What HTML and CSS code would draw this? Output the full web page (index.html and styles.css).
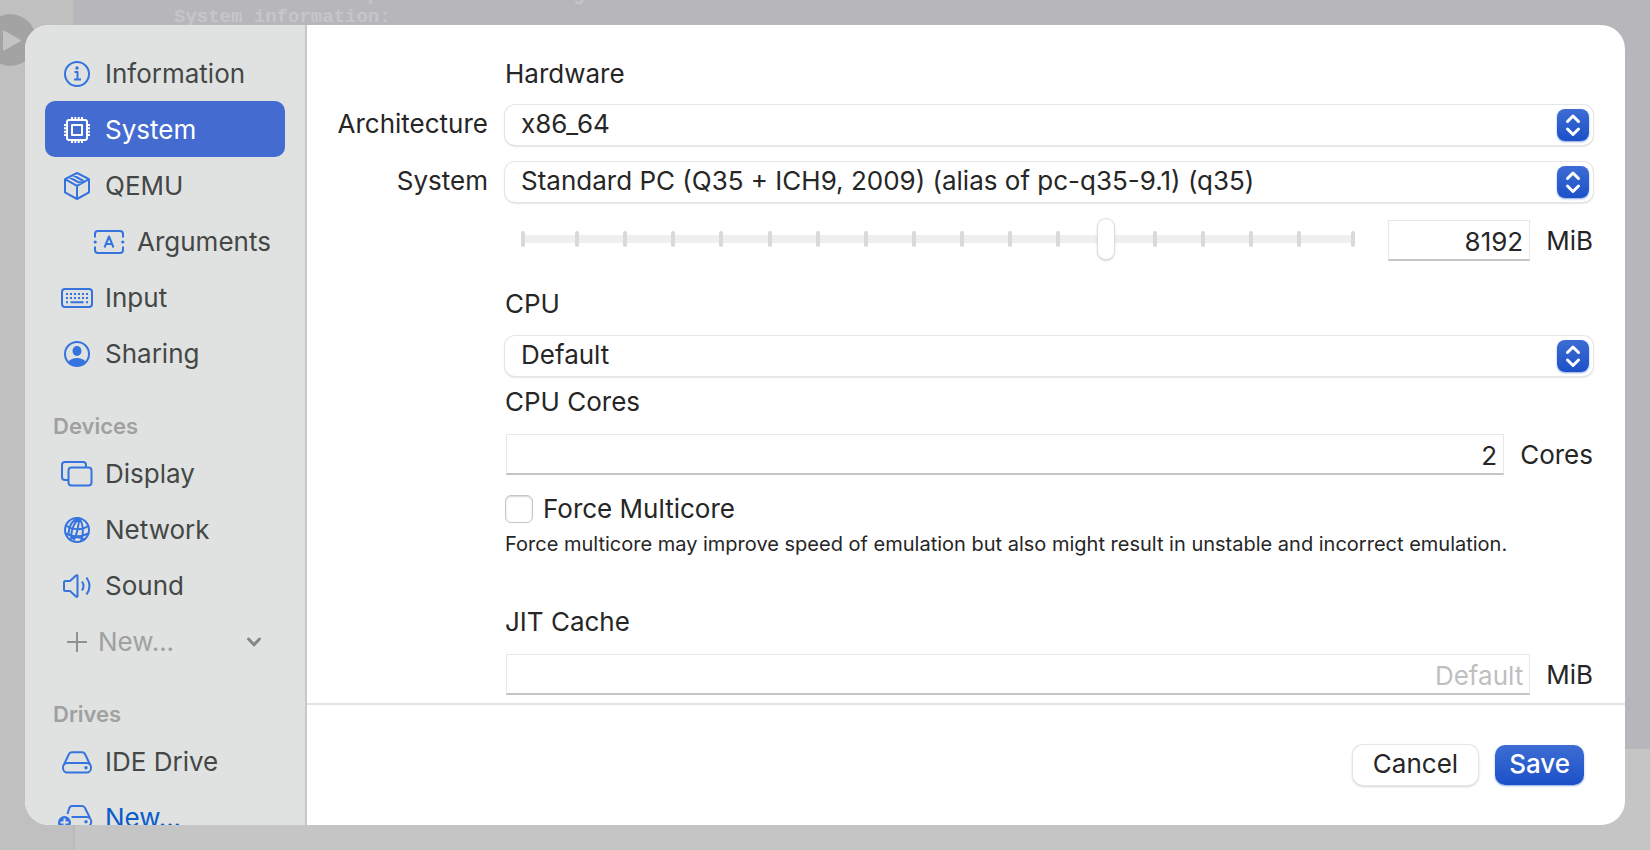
FILE: index.html
```html
<!DOCTYPE html>
<html lang="en">
<head>
<meta charset="utf-8">
<title>Virtual Machine Settings</title>
<link rel="stylesheet" href="styles.css">
</head>
<body>
<div class="backdrop" aria-hidden="true">
  <div class="backdrop-side">
    <svg class="play" viewBox="0 0 52 52"><circle cx="26" cy="26" r="26" fill="#a3a3a3"/><path d="M20 17.500v18l16-9z" fill="#c3c3c3" stroke="#c3c3c3" stroke-width="2" stroke-linejoin="round"/></svg>
  </div>
  <div class="backdrop-main">
    <pre class="console">                 p                 g
System information:</pre>
  </div>
</div>

<main class="sheet">
  <nav class="sidebar" aria-label="Settings">
    <ul class="nav-list">
      <li><a class="nav-item" href="#information">
        <svg class="icon" viewBox="0 0 32 32"><circle cx="16" cy="16" r="12"/><circle class="solid" cx="16" cy="10" r="1.700"/><path d="M13.500 14h3v7.500M13 21.500h7"/></svg>
        <span>Information</span></a></li>
      <li><a class="nav-item selected" href="#system" aria-current="page">
        <svg class="icon" viewBox="0 0 32 32"><rect x="6" y="6" width="20" height="20" rx="2"/><rect x="11" y="11" width="10" height="10"/><path d="M11 6V3M14.300 6V3M17.700 6V3M21 6V3M11 29v-3M14.300 29v-3M17.700 29v-3M21 29v-3M6 11H3M6 14.300H3M6 17.700H3M6 21H3M29 11h-3M29 14.300h-3M29 17.700h-3M29 21h-3"/></svg>
        <span>System</span></a></li>
      <li><a class="nav-item" href="#qemu">
        <svg class="icon" viewBox="0 0 32 32"><path d="M16 3l12 6.200v13.200L16 29 4 22.400V9.200zM4 9.200l12 6.600 12-6.600M16 15.800V29M8 7.200l9 4.800 4.500.8M12 5.200l10.500 5.800"/></svg>
        <span>QEMU</span></a></li>
      <li><a class="nav-item nested" href="#arguments">
        <svg class="icon" viewBox="0 0 32 32"><path d="M2 11.500V8a3 3 0 0 1 3-3h22a3 3 0 0 1 3 3v3.500M2 20.500V24a3 3 0 0 0 3 3h22a3 3 0 0 0 3-3v-3.500M11.500 21.500L16 10.500l4.500 11M13 18h6"/><circle class="solid" cx="2.200" cy="16" r="1.600"/><circle class="solid" cx="29.800" cy="16" r="1.600"/></svg>
        <span>Arguments</span></a></li>
      <li><a class="nav-item" href="#input">
        <svg class="icon" viewBox="0 0 32 32"><rect x="1" y="7" width="30" height="18" rx="3"/><path stroke-dasharray="2 2" d="M5 12h22M5 16h22"/><path d="M5 20.200h2M9.500 20.200h13M25 20.200h2"/></svg>
        <span>Input</span></a></li>
      <li><a class="nav-item" href="#sharing">
        <svg class="icon" viewBox="0 0 32 32"><circle cx="16" cy="16" r="12"/><ellipse class="solid" cx="16" cy="13" rx="4.500" ry="5"/><path class="solid" d="M7.500 24c1.500-3 5-4 8.500-4s7 1 8.500 4c-2 2.500-5 4-8.500 4s-6.500-1.500-8.500-4z"/></svg>
        <span>Sharing</span></a></li>
    </ul>
    <h2 class="nav-heading">Devices</h2>
    <ul class="nav-list">
      <li><a class="nav-item" href="#display">
        <svg class="icon" viewBox="0 0 32 32"><rect x="7.500" y="9.500" width="23" height="18" rx="3"/><path d="M7 22H4a3 3 0 0 1-3-3V7a3 3 0 0 1 3-3h18a3 3 0 0 1 3 3v2"/></svg>
        <span>Display</span></a></li>
      <li><a class="nav-item" href="#network">
        <svg class="icon" viewBox="0 0 32 32"><circle cx="16" cy="16" r="12"/><path d="M5 11.500c6 4.500 16 5 22 .5M4.500 19.500c7 3.500 16 3.500 23 0M18.500 4.500c-4.500 3-8 9-8.500 19M18.500 4.500c-1.500 7-1.500 15-6 22M18.500 4.500c4 6 4.500 15 1.500 22.500M18.500 4.500c-7 1-10.500 6-11 16M9 25c4-2.500 10-2.500 14 0"/></svg>
        <span>Network</span></a></li>
      <li><a class="nav-item" href="#sound">
        <svg class="icon" viewBox="0 0 32 32"><path d="M3 12.500a1.500 1.500 0 0 1 1.500-1.500H9l6-5.500q1.500-1 1.500.8v19.400q0 1.800-1.500.8L9 21H4.500A1.500 1.500 0 0 1 3 19.500zM21 11.500q3 4.500 0 9M25.500 7.500q6 8.500 0 17"/></svg>
        <span>Sound</span></a></li>
      <li><button class="nav-item nav-menu" type="button">
        <svg class="icon" viewBox="0 0 32 32"><path d="M16 6v20M6 16h20"/></svg>
        <span>New...</span>
        <svg class="chevron" viewBox="0 0 16 16"><path d="M2.500 5L8 10.800 13.500 5"/></svg></button></li>
    </ul>
    <h2 class="nav-heading">Drives</h2>
    <ul class="nav-list">
      <li><a class="nav-item" href="#ide-drive">
        <svg class="icon" viewBox="0 0 32 32"><path d="M3 18.500L8 8q.8-1.800 3-1.800h10q2.200 0 3 1.800l5 10.500"/><rect x="2" y="17" width="28" height="9.500" rx="4.500"/><circle class="solid" cx="25" cy="21.700" r="1.700"/></svg>
        <span>IDE Drive</span></a></li>
      <li><button class="nav-item nav-action" type="button">
        <svg class="icon" viewBox="0 0 32 32"><path d="M6.500 12L8 7q.8-3 3-3h10q2.200 0 3 2l5 10M10.500 15h15a4.500 4.500 0 0 1 0 9.500H12"/><circle class="solid" cx="25" cy="19.700" r="1.700"/><circle class="solid" cx="3.500" cy="20.500" r="6.500"/><path class="cutout" d="M3.500 16.500v8M-.5 20.500h8"/></svg>
        <span>New...</span></button></li>
    </ul>
  </nav>

  <form class="detail">
    <div class="fields">
      <h3 class="section first">Hardware</h3>

      <label class="row-label" for="arch">Architecture</label>
      <div class="popup">
        <select id="arch"><option>x86_64</option></select>
        <span class="stepper"><svg viewBox="0 0 32 32"><path d="M10.500 12.500L16 7l5.500 5.500M10.500 20L16 25.500l5.500-5.500"/></svg></span>
      </div>

      <label class="row-label" for="machine">System</label>
      <div class="popup">
        <select id="machine"><option>Standard PC (Q35 + ICH9, 2009) (alias of pc-q35-9.1) (q35)</option></select>
        <span class="stepper"><svg viewBox="0 0 32 32"><path d="M10.500 12.500L16 7l5.500 5.500M10.500 20L16 25.500l5.500-5.500"/></svg></span>
      </div>

      <div class="control memory">
        <div class="slider">
          <div class="ticks"><i></i><div class="ticks-inner"><i></i><i></i><i></i><i></i><i></i><i></i><i></i><i></i><i></i><i></i><i></i><i></i><i></i><i></i><i></i><i></i></div><i></i></div>
          <input type="range" min="0" max="1000" value="702" aria-label="Memory">
        </div>
        <input class="field narrow" id="memory" type="text" value="8192">
        <label class="unit" for="memory">MiB</label>
      </div>

      <label class="section cpu" for="cpu">CPU</label>
      <div class="popup wide">
        <select id="cpu"><option>Default</option></select>
        <span class="stepper"><svg viewBox="0 0 32 32"><path d="M10.500 12.500L16 7l5.500 5.500M10.500 20L16 25.500l5.500-5.500"/></svg></span>
      </div>

      <h3 class="section cores">CPU Cores</h3>
      <div class="control">
        <input class="field" id="cores" type="text" value="2">
        <label class="unit" for="cores">Cores</label>
      </div>

      <label class="check"><input type="checkbox"><span>Force Multicore</span></label>
      <p class="caption">Force multicore may improve speed of emulation but also might result in unstable and incorrect emulation.</p>

      <h3 class="section jit">JIT Cache</h3>
      <div class="control">
        <input class="field" id="jit" type="text" placeholder="Default">
        <label class="unit" for="jit">MiB</label>
      </div>
    </div>
    <footer class="actions">
      <button class="button" type="button">Cancel</button>
      <button class="button primary" type="submit">Save</button>
    </footer>
  </form>
</main>
</body>
</html>
```
FILE: styles.css
```css
* { box-sizing: border-box; }

body {
  margin: 0;
  height: 100vh;
  display: grid;
  overflow: hidden;
  background: #c5c5c5;
  color: #262626;
  font: 26px/32px Inter, "Liberation Sans", sans-serif;
}

input, select, button { font: inherit; color: inherit; }
h2, h3, p, ul, pre { margin: 0; padding: 0; }
ul { list-style: none; }

/* Dimmed window behind the sheet */
.backdrop {
  grid-area: 1 / 1;
  display: flex;
  overflow: hidden;
}
.backdrop-side {
  width: 75px;
  flex: none;
  background: #c0c0c0;
  border-right: 2px solid #b9b9b9;
}
.play { display: block; width: 52px; margin: 14px 0 0 -16px; }
.backdrop-main {
  flex: 1;
  margin-bottom: 101px;
  background: #b7b6bb;
}
.console {
  padding-left: 99px;
  margin-top: -16px;
  color: #c6c6ca;
  font: bold 19px/22px "Liberation Mono", monospace;
}

/* Sheet */
.sheet {
  grid-area: 1 / 1;
  z-index: 1;
  display: flex;
  margin: 25px;
  min-height: 0;
  border-radius: 24px;
  overflow: hidden;
  background: #fff;
}

.sidebar {
  flex: none;
  width: 282px;
  padding: 20px;
  overflow: hidden;
  background: #dfe2e0;
  border-right: 2px solid #c6c8c7;
}
.nav-item {
  display: flex;
  align-items: center;
  gap: 12px;
  width: 240px;
  height: 56px;
  padding: 2px 16px 0;
  border: 0;
  border-radius: 10px;
  background: none;
  color: #454746;
  text-decoration: none;
  text-align: left;
  white-space: nowrap;
}
.nav-item.nested { padding-left: 48px; padding-right: 0; }
.nav-item.selected { background: #446bcf; color: #fff; }
.nav-heading {
  padding: 29px 8px 3px;
  color: #9fa1a0;
  font-size: 22px;
  line-height: 32px;
  font-weight: 600;
}
.icon {
  flex: none;
  width: 32px;
  height: 32px;
  overflow: visible;
  fill: none;
  stroke: #3573de;
  stroke-width: 2;
  stroke-linecap: butt;
  stroke-linejoin: round;
}
.icon .solid { fill: #3573de; stroke: none; }
.icon .cutout { stroke: #dfe2e0; }
.selected .icon { stroke: #fff; }
.nav-menu { color: #9fa1a0; gap: 5px; }
.nav-menu .icon { stroke: #8f9190; }
.nav-action { color: #0a5bcb; }
.chevron {
  width: 16px;
  height: 16px;
  margin-left: auto;
  margin-right: 7px;
  fill: none;
  stroke: #858786;
  stroke-width: 3;
  stroke-linecap: round;
  stroke-linejoin: round;
}

/* Detail form */
.detail {
  flex: 1;
  min-width: 0;
  display: flex;
  flex-direction: column;
}
.fields {
  flex: 1;
  min-height: 0;
  overflow: hidden;
  display: grid;
  grid-template-columns: 181px minmax(0, 1fr);
  column-gap: 17px;
  align-content: start;
  padding: 33px 32px 0 0;
}
.fields > * { grid-column: 2; }
.section { font-size: 26px; font-weight: 400; line-height: 32px; }
.first { margin-bottom: 15px; }
.cpu { margin-top: 25px; margin-bottom: 16px; }
.cores { margin-top: 10px; margin-bottom: 16px; }
.jit { margin-top: 48px; margin-bottom: 16px; }
.fields > .row-label {
  grid-column: 1;
  justify-self: end;
  line-height: 38px;
}

.popup {
  display: grid;
  height: 40px;
  margin-bottom: 17px;
  border-radius: 10px;
  background: #fff;
  box-shadow: 0 0 0 1px #e6e6e6, 0 1px 2px #a8a8a8;
}
.popup.wide { margin-bottom: 0; }
.popup select {
  grid-area: 1 / 1;
  appearance: none;
  border: 0;
  padding: 0 48px 2px 16px;
  background: none;
  text-overflow: ellipsis;
}
.stepper {
  grid-area: 1 / 1;
  place-self: center end;
  width: 32px;
  height: 32px;
  margin-right: 4px;
  border-radius: 8px;
  background: linear-gradient(#3d6dd3, #1c50c8);
  box-shadow: 0 1px 2px #8aa6e3;
  pointer-events: none;
}
.stepper svg {
  display: block;
  fill: none;
  stroke: #fff;
  stroke-width: 3;
  stroke-linecap: round;
  stroke-linejoin: round;
}

.control {
  display: flex;
  align-items: center;
  gap: 16px;
  padding-left: 1px;
}
.memory { margin-top: -1px; padding-left: 10px; }
.field {
  flex: 1;
  min-width: 0;
  height: 41px;
  padding: 3px 6px 0;
  border: 1px solid #e8e8e8;
  border-bottom: 2px solid #c4c4c4;
  background: #fff;
  text-align: right;
}
.field::placeholder { color: #bfbfbf; opacity: 1; }
.narrow { flex: none; width: 142px; }

.slider {
  flex: 1;
  display: grid;
  align-items: center;
  margin: 0 11px 4px 0;
}
.ticks {
  grid-area: 1 / 1;
  display: flex;
  justify-content: space-between;
  height: 16px;
  margin: 0 6px;
  background: linear-gradient(#efefef, #efefef) center / 100% 8px no-repeat;
}
.ticks-inner {
  flex: 1;
  display: flex;
  justify-content: space-between;
  margin: 0 50px;
}
.ticks i {
  width: 4px;
  height: 16px;
  border-radius: 2px;
  background: #d9d9d9;
}
.slider input {
  grid-area: 1 / 1;
  appearance: none;
  width: 100%;
  height: 41px;
  margin: 0;
  background: none;
}
.slider input::-webkit-slider-thumb {
  appearance: none;
  width: 16px;
  height: 40px;
  border-radius: 8px;
  background: #fff;
  box-shadow: 0 0 0 1px #dedede, 0 1px 3px #b0b0b0;
}

.check {
  display: flex;
  align-items: center;
  gap: 10px;
  margin-top: 18px;
}
.check input {
  appearance: none;
  width: 28px;
  height: 28px;
  margin: 0;
  border: 1px solid #c6c6c6;
  border-radius: 6px;
  background: #fff;
  box-shadow: inset 0 1px 2px #d4d4d4;
}
.caption {
  margin-top: 5px;
  font-size: 20px;
  line-height: 28px;
}

.actions {
  display: flex;
  justify-content: flex-end;
  gap: 17px;
  padding: 40px 41px;
  border-top: 2px solid #e2e2e2;
}
.button {
  height: 40px;
  padding: 0 20px 2px;
  border: 0;
  border-radius: 10px;
  background: #fff;
  box-shadow: 0 0 0 1px #e6e6e6, 0 1px 3px #a8a8a8;
}
.primary {
  padding: 0 14px 2px;
  color: #fff;
  font-weight: 500;
  background: linear-gradient(#3d6dd3, #1c50c8);
  box-shadow: 0 1px 2px #8aa6e3;
}
```
